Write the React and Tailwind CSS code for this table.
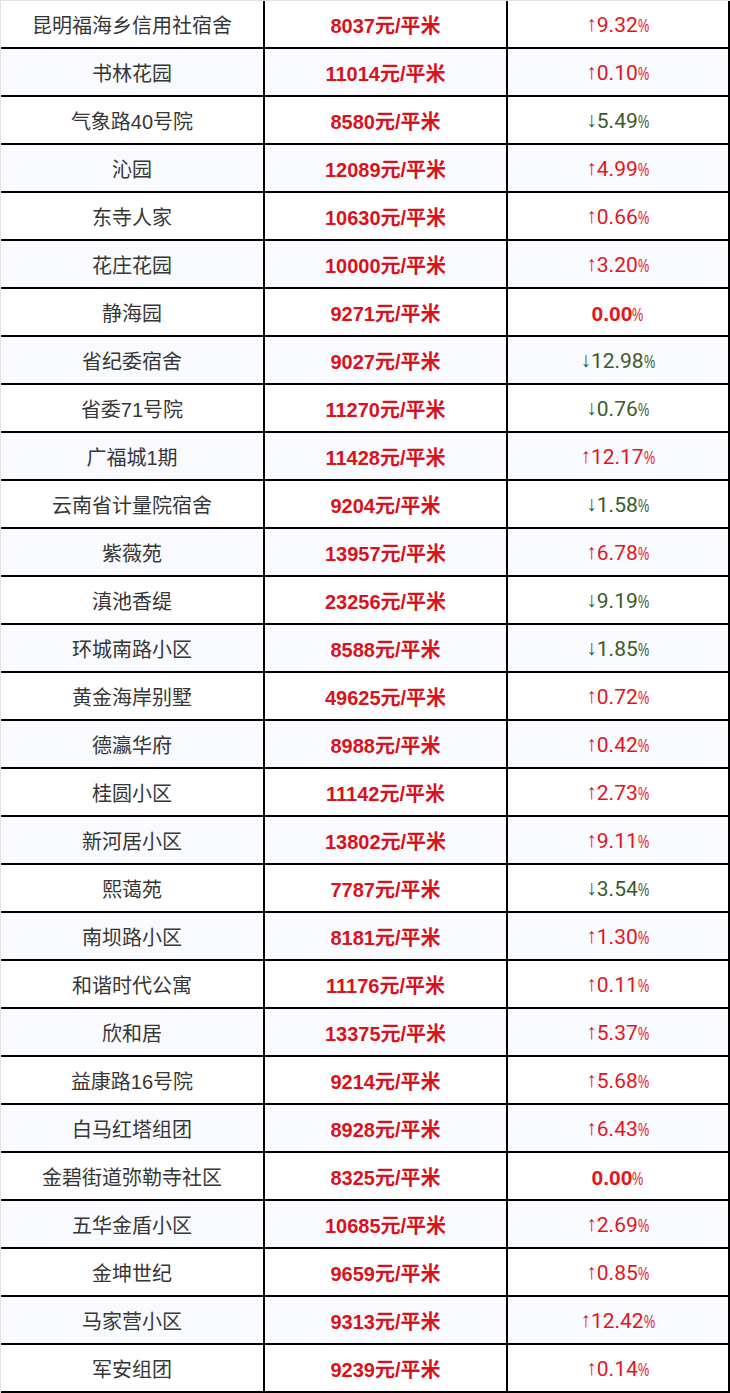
const rows = [
  ["昆明福海乡信用社宿舍", "8037", "up", "9.32"],
  ["书林花园", "11014", "up", "0.10"],
  ["气象路40号院", "8580", "down", "5.49"],
  ["沁园", "12089", "up", "4.99"],
  ["东寺人家", "10630", "up", "0.66"],
  ["花庄花园", "10000", "up", "3.20"],
  ["静海园", "9271", "flat", "0.00"],
  ["省纪委宿舍", "9027", "down", "12.98"],
  ["省委71号院", "11270", "down", "0.76"],
  ["广福城1期", "11428", "up", "12.17"],
  ["云南省计量院宿舍", "9204", "down", "1.58"],
  ["紫薇苑", "13957", "up", "6.78"],
  ["滇池香缇", "23256", "down", "9.19"],
  ["环城南路小区", "8588", "down", "1.85"],
  ["黄金海岸别墅", "49625", "up", "0.72"],
  ["德瀛华府", "8988", "up", "0.42"],
  ["桂圆小区", "11142", "up", "2.73"],
  ["新河居小区", "13802", "up", "9.11"],
  ["熙蔼苑", "7787", "down", "3.54"],
  ["南坝路小区", "8181", "up", "1.30"],
  ["和谐时代公寓", "11176", "up", "0.11"],
  ["欣和居", "13375", "up", "5.37"],
  ["益康路16号院", "9214", "up", "5.68"],
  ["白马红塔组团", "8928", "up", "6.43"],
  ["金碧街道弥勒寺社区", "8325", "flat", "0.00"],
  ["五华金盾小区", "10685", "up", "2.69"],
  ["金坤世纪", "9659", "up", "0.85"],
  ["马家营小区", "9313", "up", "12.42"],
  ["军安组团", "9239", "up", "0.14"],
];

const Change = ({ dir, value }) => {
  const color = dir === "down" ? "text-[#3d5a2a]" : "text-[#e4141e]";
  return (
    <span className={`inline-flex items-baseline ${color}`}>
      {dir === "up" && <span className="text-[21px] font-normal relative top-[-1px]">↑</span>}
      {dir === "down" && <span className="text-[21px] font-normal relative top-[-1px]">↓</span>}
      <span
        className={`text-[21px] ${dir === "flat" ? "font-bold" : "font-normal"}`}
        style={{ fontFamily: dir === "flat" ? undefined : 'Roboto, "Liberation Sans", sans-serif' }}
      >
        {value}
      </span>
      <span className="inline-block text-[19px] scale-x-[0.66] origin-left -mr-[5px]">%</span>
    </span>
  );
};

export default function App() {
  return (
    <div
      className="w-[730px] bg-white border-l border-t border-[#e2e2e2]"
      style={{ fontFamily: '"Liberation Sans", "Noto Sans CJK SC", sans-serif' }}
    >
      {rows.map(([name, price, dir, value], i) => (
        <div
          key={name}
          className={`grid grid-cols-[264px_243px_222px] h-[48px] border-b-2 border-black ${
            i % 2 === 1 ? "bg-[#f8fafd]" : "bg-white"
          }`}
        >
          <div className="flex items-center justify-center pt-[3px] border-r-2 border-black text-[20px] text-[#363636]">
            {name}
          </div>
          <div className="flex items-center justify-center pt-[3px] border-r-2 border-black text-[20px] font-bold text-[#d9121c]">
            {price}元/平米
          </div>
          <div className="flex items-center justify-center pt-[3px] border-r-2 border-black">
            <Change dir={dir} value={value} />
          </div>
        </div>
      ))}
    </div>
  );
}
